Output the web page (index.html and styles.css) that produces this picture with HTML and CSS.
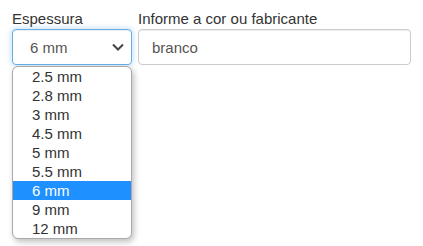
FILE: index.html
```html
<!DOCTYPE html>
<html lang="pt">
<head>
<meta charset="utf-8">
<link rel="stylesheet" href="styles.css">
</head>
<body>
<div class="row">
  <div class="field field-thick">
    <div class="label">Espessura</div>
    <div class="select">
      <span class="select-value">6 mm</span>
      <svg class="chevron" width="12" height="8" viewBox="0 0 12 8"><path d="M1 1.5 L6 6.5 L11 1.5" fill="none" stroke="#444" stroke-width="2"/></svg>
    </div>
    <div class="popup">
      <div class="option">2.5 mm</div>
      <div class="option">2.8 mm</div>
      <div class="option">3 mm</div>
      <div class="option">4.5 mm</div>
      <div class="option">5 mm</div>
      <div class="option">5.5 mm</div>
      <div class="option selected">6 mm</div>
      <div class="option">9 mm</div>
      <div class="option">12 mm</div>
    </div>
  </div>
  <div class="field field-color">
    <div class="label">Informe a cor ou fabricante</div>
    <div class="input">branco</div>
  </div>
</div>
</body>
</html>
```

FILE: styles.css
```css
html, body {
  margin: 0;
  padding: 0;
  background: #fff;
}
html { height: 100%; }
body {
  font-family: "Liberation Sans", Arial, sans-serif;
  color: #333;
  padding: 8px 12px 0 12px;
  min-height: 246px;
  box-sizing: border-box;
}
.row {
  display: flex;
  gap: 6px;
  align-items: flex-start;
}
.field {
  display: flex;
  flex-direction: column;
}
.field-thick {
  width: 120px;
}
.field-color { width: 273px; }
.label {
  font-size: 15px;
  line-height: 21px;
  color: #333;
  height: 21px;
}
.select {
  position: relative;
  z-index: 1;
  box-sizing: border-box;
  height: 36px;
  border: 1px solid #66afe9;
  border-radius: 4px;
  box-shadow: inset 0 1px 1px rgba(0,0,0,.075), 0 0 6px rgba(102,175,233,.5);
  background: #fff;
  display: flex;
  align-items: center;
  padding: 0 4px 0 17px;
  font-size: 15px;
  color: #555;
}
.select-value { flex: 1; }
.chevron { margin-right: 3px; }
.input {
  box-sizing: border-box;
  height: 36px;
  border: 1px solid #ccc;
  border-radius: 4px;
  box-shadow: inset 0 1px 1px rgba(0,0,0,.075);
  display: flex;
  align-items: center;
  padding: 0 13px;
  font-size: 15px;
  color: #555;
}
.popup {
  position: relative;
  z-index: 2;
  margin-top: 1px;
  width: 120px;
  box-sizing: border-box;
  background: #fff;
  border: 1px solid #a9a9a9;
  border-radius: 6px;
  overflow: hidden;
  box-shadow: 2px 3px 6px rgba(0,0,0,.25);
}
.option {
  height: 19px;
  line-height: 19px;
  padding-left: 19px;
  font-size: 15px;
  color: #333;
}
.option.selected {
  background: #1e90ff;
  color: #fff;
}
```
